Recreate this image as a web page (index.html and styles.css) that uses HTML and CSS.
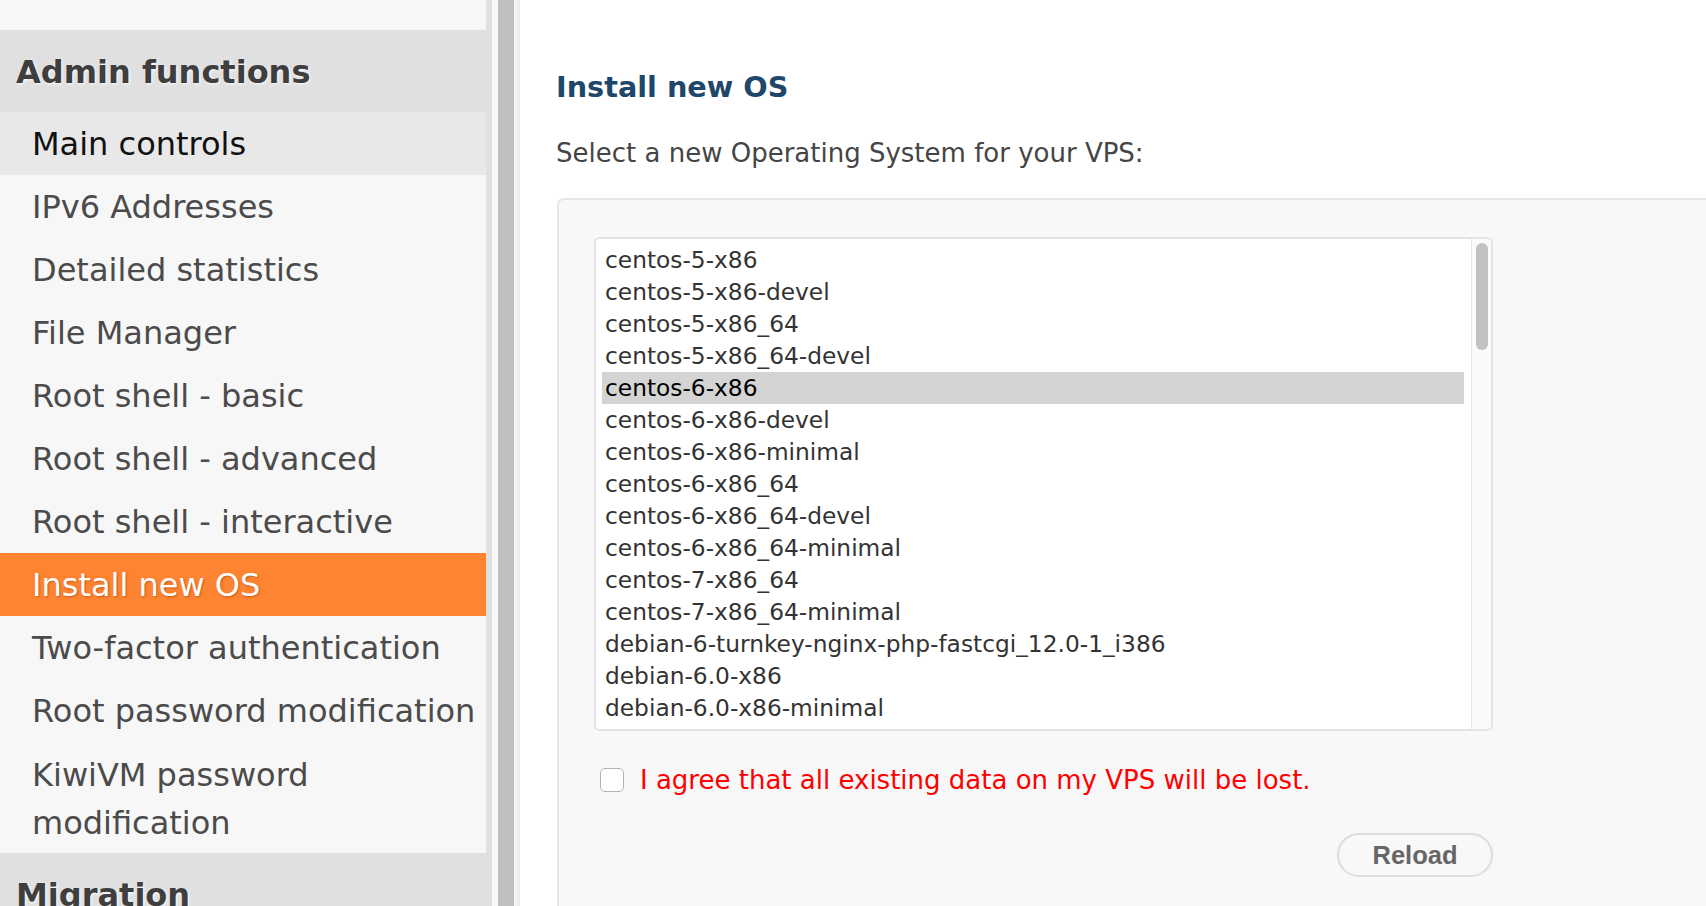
FILE: index.html
```html
<!DOCTYPE html>
<html lang="en">
<head>
<meta charset="utf-8">
<title>Install new OS</title>
<link rel="stylesheet" href="styles.css">
</head>
<body>
<div class="page">
  <aside class="sidebar">
    <div class="side-top"></div>
    <div class="side-head">Admin functions</div>
    <ul class="side-list">
      <li class="side-item current">Main controls</li>
      <li class="side-item">IPv6 Addresses</li>
      <li class="side-item">Detailed statistics</li>
      <li class="side-item">File Manager</li>
      <li class="side-item">Root shell - basic</li>
      <li class="side-item">Root shell - advanced</li>
      <li class="side-item">Root shell - interactive</li>
      <li class="side-item active">Install new OS</li>
      <li class="side-item">Two-factor authentication</li>
      <li class="side-item">Root password modification</li>
      <li class="side-item">KiwiVM password modification</li>
    </ul>
    <div class="side-head">Migration</div>
  </aside>
  <div class="splitter"></div>
  <main class="main">
    <h1 class="title">Install new OS</h1>
    <p class="lead">Select a new Operating System for your VPS:</p>
    <section class="panel">
      <div class="listbox">
        <div class="options">
          <div class="opt">centos-5-x86</div>
          <div class="opt">centos-5-x86-devel</div>
          <div class="opt">centos-5-x86_64</div>
          <div class="opt">centos-5-x86_64-devel</div>
          <div class="opt selected">centos-6-x86</div>
          <div class="opt">centos-6-x86-devel</div>
          <div class="opt">centos-6-x86-minimal</div>
          <div class="opt">centos-6-x86_64</div>
          <div class="opt">centos-6-x86_64-devel</div>
          <div class="opt">centos-6-x86_64-minimal</div>
          <div class="opt">centos-7-x86_64</div>
          <div class="opt">centos-7-x86_64-minimal</div>
          <div class="opt">debian-6-turnkey-nginx-php-fastcgi_12.0-1_i386</div>
          <div class="opt">debian-6.0-x86</div>
          <div class="opt">debian-6.0-x86-minimal</div>
          <div class="opt">debian-6.0-x86_64</div>
        </div>
        <div class="scrolltrack"><div class="thumb"></div></div>
      </div>
      <label class="agree">
        <span class="checkbox"></span>
        <span class="agree-text">I agree that all existing data on my VPS will be lost.</span>
      </label>
      <div class="actions">
        <button class="btn" type="button">Reload</button>
      </div>
    </section>
  </main>
</div>
</body>
</html>
```

FILE: styles.css
```css
* { box-sizing: border-box; }

html, body {
  margin: 0;
  padding: 0;
  height: 906px;
  overflow: hidden;
  background: #ffffff;
  font-family: "DejaVu Sans", Verdana, sans-serif;
}

.page {
  display: flex;
  height: 906px;
}

/* ---------- sidebar ---------- */
.sidebar {
  width: 492px;
  flex: none;
  background: #e0e0e0;
  overflow: hidden;
}

.side-top {
  height: 30px;
  width: 486px;
  background: #f7f7f7;
}

.side-head {
  padding: 19px 0 16px 16px;
  font-size: 32px;
  line-height: 47px;
  font-weight: bold;
  color: #3e3e3e;
  text-shadow: 1px 1px 3px rgba(255, 255, 255, 0.9);
}

.side-list {
  list-style: none;
  margin: 0;
  padding: 0;
}

.side-item {
  width: 486px;
  padding: 9px 4px 7px 32px;
  font-size: 32px;
  line-height: 47px;
  color: #4b4b4b;
  background: #f7f7f7;
}

.side-item:last-child {
  line-height: 48px;
  padding-bottom: 6px;
}

.side-item.current {
  background: #e8e8e8;
  color: #111111;
}

.side-item.active {
  background: #ff8432;
  color: #ffffff;
  text-shadow: 1px 1px 2px rgba(120, 50, 0, 0.45);
}

/* ---------- splitter ---------- */
.splitter {
  width: 28px;
  flex: none;
  background: linear-gradient(to right,
    #f9f9f9 0, #f9f9f9 6px,
    #c0c0c0 6px, #c0c0c0 22px,
    #f4f4f4 22px, #f4f4f4 25px,
    #ececec 25px, #ececec 28px);
}

/* ---------- main ---------- */
.main {
  flex: 1;
  padding-left: 36px;
  overflow: hidden;
}

.title {
  margin: 70px 0 0;
  font-size: 28.7px;
  line-height: 34px;
  font-weight: bold;
  color: #1f4769;
}

.lead {
  margin: 33px 0 0;
  font-size: 26px;
  line-height: 32px;
  color: #454545;
}

.panel {
  margin: 29px 0 0 1px;
  width: 1250px;
  padding: 37px 0 0 35px;
  height: 760px;
  background: #f8f8f8;
  border: 2px solid #e6e6e6;
  border-radius: 7px 0 0 0;
}

.listbox {
  width: 899px;
  height: 494px;
  display: flex;
  background: #ffffff;
  border: 2px solid #e3e3e3;
  border-radius: 6px;
  overflow: hidden;
}

.options {
  flex: 1;
  padding: 5px 7px 0 6px;
  overflow: hidden;
}

.opt {
  height: 32px;
  padding-left: 3px;
  font-size: 23.3px;
  line-height: 32px;
  color: #333333;
  white-space: nowrap;
}

.opt.selected {
  background: #d4d4d4;
  color: #000000;
}

.scrolltrack {
  width: 20px;
  flex: none;
  background: #fafafa;
  border-left: 1px solid #e6e6e6;
  padding: 4px 0 0 4px;
}

.thumb {
  width: 12px;
  height: 107px;
  border-radius: 6px;
  background: #c1c1c1;
}

.agree {
  display: flex;
  align-items: center;
  gap: 16px;
  margin: 33px 0 0 6px;
}

.checkbox {
  width: 24px;
  height: 24px;
  flex: none;
  border: 1.5px solid #b3b3b3;
  border-radius: 5px;
  background: #ffffff;
}

.agree-text {
  font-size: 26px;
  line-height: 32px;
  color: #ff0000;
}

.actions {
  width: 899px;
  display: flex;
  justify-content: flex-end;
  margin-top: 37px;
}

.btn {
  width: 156px;
  height: 44px;
  border: 2px solid #dcdcdc;
  border-radius: 22px;
  background: #f8f8f8;
  font-family: "Liberation Sans", Arial, sans-serif;
  font-weight: bold;
  font-size: 25.5px;
  color: #666666;
  padding: 0;
}
```
